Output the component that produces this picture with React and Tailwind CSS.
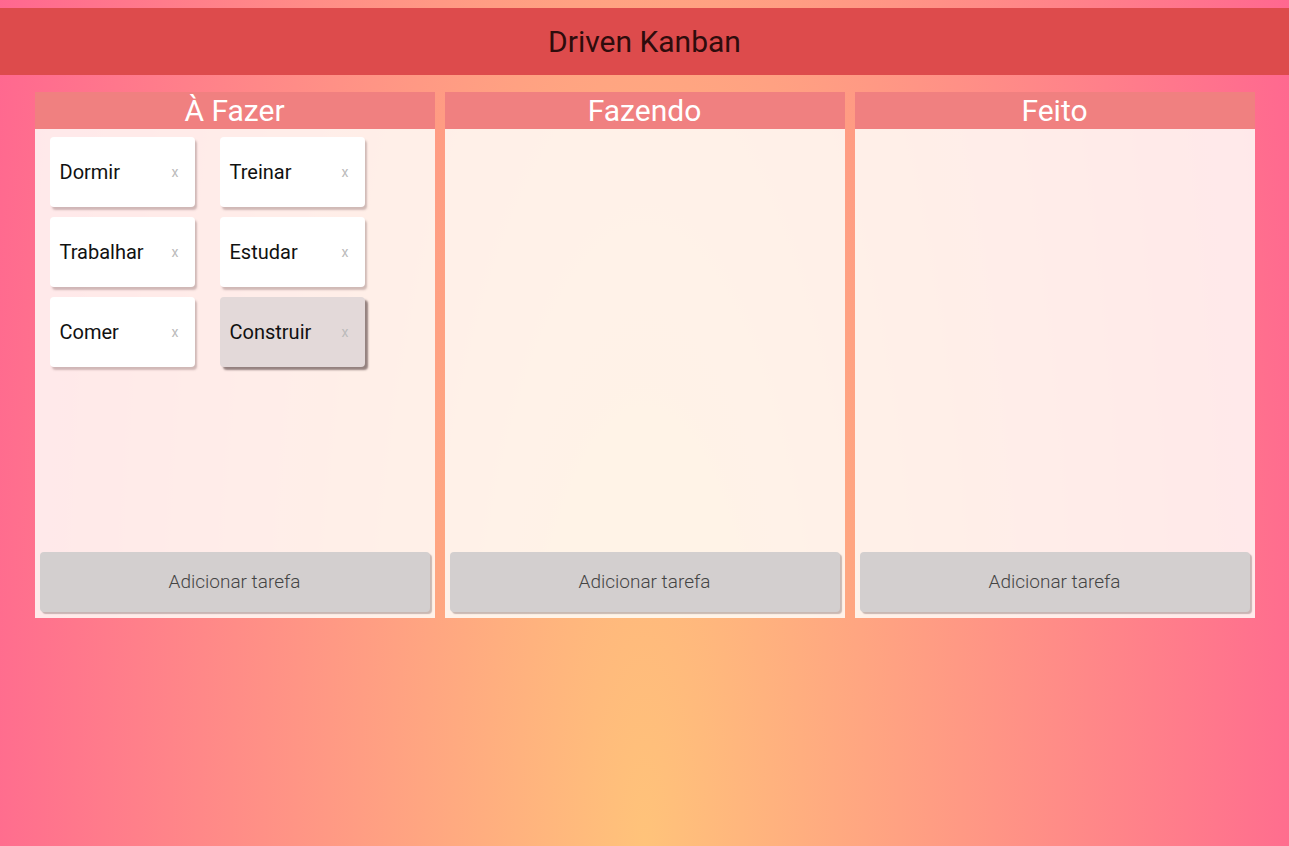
import React, { useState } from 'react';

const initialColumns = [
    {
        id: 'todo',
        title: 'À Fazer',
        tasks: ['Dormir', 'Treinar', 'Trabalhar', 'Estudar', 'Comer', 'Construir']
    },
    { id: 'doing', title: 'Fazendo', tasks: [] },
    { id: 'done', title: 'Feito', tasks: [] }
];

const TaskCard = ({ name, active, onRemove }) => (
    <div
        className={`w-[145px] h-[70px] rounded-[4px] flex items-center justify-between pl-[10px] pr-[16px] ${active
                ? 'bg-[#e3d9d9] shadow-[3px_3px_2px_rgba(60,40,40,0.55)]'
                : 'bg-white shadow-[2px_3px_2px_rgba(120,90,90,0.35)]'
            }`}
    >
        <span className="text-xl text-[#111]">{name}</span>
        <button onClick={onRemove} className="text-[14px] text-[#bbb] leading-none">
            x
        </button>
    </div>
);

const Column = ({ column, onRemove }) => (
    <div className="w-[400px] h-[526px] flex flex-col bg-[#fffefa]/85">
        {/* Column header */}
        <div className="h-[37px] bg-[#f08080] flex items-center justify-center">
            <h2 className="text-[30px] text-white leading-none">{column.title}</h2>
        </div>

        {/* Tasks */}
        <div className="flex flex-wrap content-start gap-x-[25px] gap-y-[10px] pl-[15px] pt-[8px]">
            {column.tasks.map((task) => (
                <TaskCard
                    key={task}
                    name={task}
                    active={task === 'Construir'}
                    onRemove={() => onRemove(column.id, task)}
                />
            ))}
        </div>

        {/* Add button */}
        <button className="mt-auto mb-[6px] mx-[5px] h-[60px] rounded-[4px] bg-[#d3cfcf] shadow-[2px_2px_1px_rgba(120,100,100,0.4)] text-[19px] font-light text-[#444]">
            Adicionar tarefa
        </button>
    </div>
);

export default function App() {
    const [columns, setColumns] = useState(initialColumns);

    const removeTask = (columnId, task) => {
        setColumns(columns.map((c) =>
            c.id === columnId ? { ...c, tasks: c.tasks.filter((t) => t !== task) } : c
        ));
    };

    return (
        <div
            className="min-h-screen pt-[8px] bg-[radial-gradient(ellipse_700px_2400px_at_50%_100%,#ffc37a,#ff6690)]"
            style={{ fontFamily: 'Roboto, "Noto Sans", sans-serif' }}
        >
            <header className="h-[67px] bg-[#dd4b4c] flex items-center justify-center">
                <h1 className="text-[30px] text-[#2e0c0c]">Driven Kanban</h1>
            </header>

            <main className="flex justify-center gap-[10px] mt-[17px]">
                {columns.map((column) => (
                    <Column key={column.id} column={column} onRemove={removeTask} />
                ))}
            </main>
        </div>
    );
}
